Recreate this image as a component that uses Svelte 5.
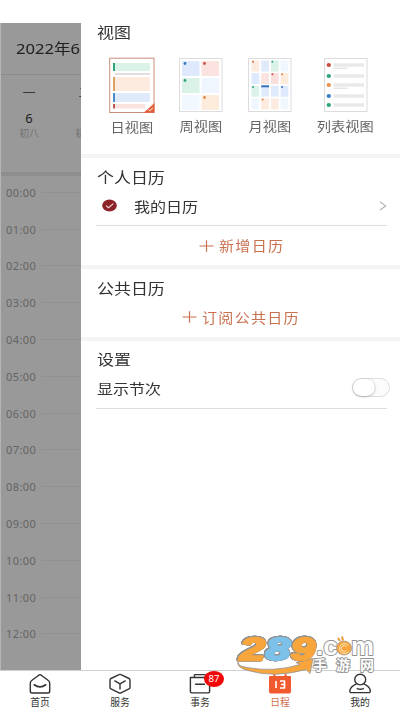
<script lang="ts">
  const hours = Array.from({ length: 13 }, (_, i) => `${String(i).padStart(2, '0')}:00`);

  const views = [
    { id: 'day', label: '日视图' },
    { id: 'week', label: '周视图' },
    { id: 'month', label: '月视图' },
    { id: 'list', label: '列表视图' }
  ];

  const tabs = [
    { id: 'home', label: '首页' },
    { id: 'service', label: '服务' },
    { id: 'affairs', label: '事务', badge: 87 },
    { id: 'schedule', label: '日程' },
    { id: 'mine', label: '我的' }
  ];

  const weekCells = [
    { fill: '#dfe9fd', dot: '#3d74c4' },
    { fill: '#fae3e0', dot: '#cc4b41' },
    { fill: '#daf2e8', dot: '#2fa678' },
    { fill: '#f0f6ff', dot: '' },
    { fill: '#f1f8ff', dot: '' },
    { fill: '#fdebdc', dot: '#e28a48' }
  ];

  const monthCells = [
    { fill: '#fdebdf', dot: '#d76c48' },
    { fill: '#dfeafb', dot: '' },
    { fill: '#daf2e8', dot: '#2fa678' },
    { fill: '#f0f7ff', dot: '' },
    { fill: '#dfe9fd', dot: '' },
    { fill: '#fae3e0', dot: '' },
    { fill: '#fadfdc', dot: '#cc4b41' },
    { fill: '#fdebdc', dot: '#e28a48' },
    { fill: '#daf2e8', dot: '#2fa678' },
    { fill: '#dfeafb', dot: '' },
    { fill: '#dfeafb', dot: '' },
    { fill: '#dfe9fd', dot: '#3d74c4' },
    { fill: '#f0f7ff', dot: '' },
    { fill: '#fdebdf', dot: '#e28a48' },
    { fill: '#fdebe2', dot: '' },
    { fill: '#f0f7ff', dot: '' }
  ];

  const listRows = [
    { y: 7, color: '#cc4b41', sub: true },
    { y: 18, color: '#2fa678', sub: false },
    { y: 27, color: '#e8914f', sub: true },
    { y: 38, color: '#3b7ec9', sub: false },
    { y: 47, color: '#2fa678', sub: false }
  ];

  let selected = $state('day');
  let activeTab = $state('schedule');
  let showSections = $state(false);
</script>

<div class="screen">
  <div class="main">
    <!-- Calendar behind the drawer -->
    <div class="calendar">
      <div class="month"><span class="wide">2022年6</span></div>
      <div class="week">
        <div class="day">
          <span class="weekday">一</span>
          <span class="date">6</span>
          <span class="lunar">初八</span>
        </div>
        <div class="day">
          <span class="weekday">二</span>
          <span class="date"></span>
          <span class="lunar">初九</span>
        </div>
      </div>
      <div class="hours">
        {#each hours as hour}
          <div class="hour"><span>{hour}</span><i></i></div>
        {/each}
      </div>
    </div>

    <div class="drawer">
      <section class="views-section">
        <h3><span class="wide">视图</span></h3>
        <div class="views">
          {#each views as view}
            <button class="view {view.id}-view" onclick={() => (selected = view.id)}>
              <svg width="46" height="57" viewBox="0 0 46 57">
                {#if view.id === 'day'}
                  <rect x=".7" y="1.2" width="44.3" height="54.3" fill="#fff" stroke="#c98d7c" />
                  <rect x="4" y="6" width="2" height="8" fill="#2fa678" />
                  <rect x="6" y="6" width="35" height="8" fill="#daf2e8" />
                  <rect x="6" y="16.5" width="35" height="1" fill="#c9bbbb" />
                  <rect x="4" y="20" width="2" height="14" fill="#dda15f" />
                  <rect x="6" y="20" width="35" height="14" fill="#fdebdf" />
                  <rect x="4" y="36" width="2" height="9" fill="#4a8cc9" />
                  <rect x="6" y="36" width="35" height="9" fill="#dfebfb" />
                  <rect x="4" y="47" width="2" height="4.5" fill="#bd5c4c" />
                  <rect x="6" y="47" width="30" height="4.5" fill="#fae3df" />
                {:else}
                  <rect x="1.5" y="1.5" width="42.5" height="53" fill="#fff" stroke="#dcdcdc" />
                {/if}

                {#if view.id === 'week'}
                  {#each weekCells as cell, i}
                    {@const x = 4 + (i % 2) * 19.5}
                    {@const y = 4 + Math.floor(i / 2) * 17}
                    <rect {x} {y} width="17.5" height="15" fill={cell.fill} />
                    {#if cell.dot}
                      <circle cx={x + 3} cy={y + 2.5} r="1.4" fill={cell.dot} />
                    {/if}
                  {/each}
                {:else if view.id === 'month'}
                  {#each monthCells as cell, i}
                    {@const x = 4.5 + (i % 4) * 9.7}
                    {@const y = 3.5 + Math.floor(i / 4) * 12.6}
                    <rect {x} {y} width="7.8" height="11" fill={cell.fill} />
                    {#if cell.dot}
                      <circle cx={x + 1.5} cy={y + 1.2} r="1" fill={cell.dot} />
                    {/if}
                  {/each}
                  <rect x="14.2" y="28.3" width="7.8" height="2" fill="#3474be" />
                {:else if view.id === 'list'}
                  {#each listRows as row}
                    <ellipse cx="5.8" cy={row.y + 1} rx="2.2" ry="1.9" fill={row.color} />
                    <rect x="10.5" y={row.y - 0.7} width="30.5" height="3.4" fill="#e9e9e9" />
                    {#if row.sub}
                      <rect x="10.5" y={row.y + 3.6} width="14" height="1.4" fill="#e4e4e4" />
                    {/if}
                  {/each}
                {/if}

                {#if view.id === selected}
                  <path d="M45.5 46v9.8H34.5z" fill="#e4603b" />
                  <path d="M39.3 52.5l1.6 1.3 2.9-3" fill="none" stroke="#fff" stroke-width=".9" />
                {/if}
              </svg>
              <span class="wide">{view.label}</span>
            </button>
          {/each}
        </div>
      </section>

      <section class="personal">
        <h3><span class="wide">个人日历</span></h3>
        <div class="item mine">
          <svg width="15" height="13" viewBox="0 0 15 13">
            <ellipse cx="7.5" cy="6.5" rx="7.3" ry="6.1" fill="#8c2227" />
            <path d="M4 6.6l2.5 2.1 4.8-4.1" fill="none" stroke="#f3dede" stroke-width="1.1" />
          </svg>
          <span class="wide name">我的日历</span>
          <svg class="arrow" width="8" height="10" viewBox="0 0 8 10">
            <path d="M1 .8l5.7 4.1L1 9" fill="none" stroke="#b0b0b0" stroke-width="1.1" />
          </svg>
        </div>
        <button class="add">
          <svg width="15" height="12" viewBox="0 0 15 12">
            <path d="M.5 6h14M7.5 .3v11.4" stroke="#c8714f" stroke-width="1.2" />
          </svg>
          <span class="wide">新增日历</span>
        </button>
      </section>

      <section class="public">
        <h3><span class="wide">公共日历</span></h3>
        <button class="add">
          <svg width="15" height="12" viewBox="0 0 15 12">
            <path d="M.5 6h14M7.5 .3v11.4" stroke="#c8714f" stroke-width="1.2" />
          </svg>
          <span class="wide">订阅公共日历</span>
        </button>
      </section>

      <section class="settings">
        <h3><span class="wide">设置</span></h3>
        <div class="item">
          <span class="wide">显示节次</span>
          <button
            class="switch"
            class:on={showSections}
            aria-label="显示节次"
            onclick={() => (showSections = !showSections)}
          ><i></i></button>
        </div>
      </section>
    </div>
  </div>

  <nav>
    {#each tabs as tab}
      <button class="tab" class:active={tab.id === activeTab} onclick={() => (activeTab = tab.id)}>
        <svg width="24" height="22" viewBox="0 0 24 22" fill="none" stroke="#333" stroke-width="1.4" stroke-linejoin="round" stroke-linecap="round">
          {#if tab.id === 'home'}
            <path d="M4 7.3L10.7 2.2q1.3-.9 2.6 0L20 7.3q1.7 1.2 1.7 2.7v8.2q0 1.8-1.8 1.8H4.1q-1.8 0-1.8-1.8V10q0-1.5 1.7-2.7z" />
            <path d="M6.3 11.8q5.7 4.2 11.4 0" stroke-width="1.7" />
          {:else if tab.id === 'service'}
            <path d="M12 1.4q.5 0 1 .3l8 3.8q1 .5 1 1.5v7.4q0 1-1 1.5l-8 3.9q-1 .5-2 0l-8-3.9q-1-.5-1-1.5V7q0-1 1-1.5l8-3.8q.5-.3 1-.3z" />
            <path d="M6.8 7.9l5.2 3 5.2-3M12 10.9v5.2" />
          {:else if tab.id === 'affairs'}
            <path d="M6.4 4.2V2.6q0-1 1-1h9.2q1 0 1 1v1.6M2.4 4.5h19.2v14q0 1.400-1.400 1.400H3.800q-1.400 0-1.400-1.400zM7.500 11.200h9" />
          {:else if tab.id === 'schedule'}
            <path d="M2 4h20v14.6q0 1-1 1H3q-1 0-1-1zM6.4 4V1.8M17.6 4V1.8" fill="#f1592e" stroke="#f1592e" stroke-width="2" />
            <path d="M8 8v7M12 8h4.5v7H12M13 11.5h3.5" stroke="#fff" stroke-width="1.6" stroke-linecap="butt" />
          {:else}
            <ellipse cx="12.2" cy="6.6" rx="5.5" ry="5.3" />
            <path d="M8.5 10.8q-5.8 2.5-6.6 6.5-.3 2.3 1.5 2.3h17.4q1.8 0 1.5-2.3-.8-4-6.5-6.5M9.3 15.6q3 1.4 6 0" />
          {/if}
        </svg>
        <span>{tab.label}</span>
        {#if tab.badge}
          <b>{tab.badge}</b>
        {/if}
      </button>
    {/each}
  </nav>

  <!-- Site watermark -->
  <svg class="watermark" width="142" height="42" viewBox="0 0 142 42">
    <path d="M3 25q-4 7 8 8.5 27 5 53-3l-4-2 17-4-3 15-4-4q-32 9-58 1Q-2 33 3 25z" fill="#f8a63c" stroke="#929292" stroke-width=".8" />
    <g class="digits" stroke-width="2.4">
      <text x="4" y="26" textLength="25" lengthAdjust="spacingAndGlyphs" fill="#f8a63c" stroke="#f8a63c">2</text>
      <text x="30" y="26" textLength="24" lengthAdjust="spacingAndGlyphs" fill="#7cc1ea" stroke="#7cc1ea">8</text>
      <text x="55" y="26" textLength="24" lengthAdjust="spacingAndGlyphs" fill="#f8a63c" stroke="#f8a63c">9</text>
    </g>
    <g fill="#fff" stroke="#929292" stroke-width="1.8">
      <text class="com" x="80" y="21" textLength="22" lengthAdjust="spacingAndGlyphs">.c</text>
      <text class="com" x="115" y="21" textLength="23" lengthAdjust="spacingAndGlyphs">m</text>
      <text class="cn" x="77" y="35.5">手</text>
      <text class="cn" x="100" y="35.5">游</text>
      <text class="cn" x="124" y="35.5">网</text>
    </g>
    <ellipse cx="108" cy="14" rx="7.5" ry="7" fill="#f8a63c" stroke="#929292" stroke-width=".7" />
    <path d="M104 7l-2-3M107 6.5l-1-4" stroke="#e5983d" stroke-width="2" />
    <path d="M112.500 17.500a5 5 0 1 1 0-6M110.500 16.500a3 3 0 1 1 0-4" fill="none" stroke="#fff0d8" stroke-width=".8" />
  </svg>
</div>

<style>
  :global(body) {
    background: #fff;
  }

  .screen {
    position: relative;
    width: 400px;
    height: 711px;
    overflow: hidden;
    box-sizing: border-box;
    padding-top: 23px;
    display: flex;
    flex-direction: column;
    font-family: 'Noto Sans', 'Noto Sans CJK SC', sans-serif;
    color: #333;
  }

  .main {
    display: flex;
    height: 647px;
    overflow: hidden;
  }

  button {
    border: 0;
    padding: 0;
    background: none;
    font-family: inherit;
    color: inherit;
  }

  svg {
    display: block;
    flex-shrink: 0;
  }

  .wide {
    display: inline-block;
    white-space: nowrap;
    transform: scaleX(1.13);
    transform-origin: left center;
  }

  /* Calendar */
  .calendar {
    width: 81px;
    box-sizing: border-box;
    flex-shrink: 0;
    overflow: hidden;
    background: #999;
    border-left: 1px solid #b5b5b5;
  }

  .month {
    height: 51px;
    line-height: 51px;
    padding-left: 15px;
    border-bottom: 1px solid #8a8a8a;
    font-size: 14.7px;
    color: #202020;
    white-space: nowrap;
  }

  .week {
    display: flex;
    height: 97px;
    border-bottom: 4px solid #8e8e8e;
  }

  .day {
    display: flex;
    flex-direction: column;
    align-items: center;
    flex: 0 0 56px;
    padding-top: 9px;
  }

  .weekday {
    height: 25px;
    line-height: 16px;
    font-size: 13px;
    color: #383838;
  }

  .date {
    height: 18px;
    line-height: 18px;
    font-size: 13px;
    color: #202020;
  }

  .lunar {
    line-height: 14px;
    font-size: 9.8px;
    color: #727272;
  }

  .hour {
    display: flex;
    align-items: center;
    gap: 5px;
    height: 36.8px;
    padding-left: 5px;
    font-size: 11px;
    color: #646464;
  }

  .hour span {
    width: 30px;
    letter-spacing: 0.4px;
  }

  .hour i {
    flex: 1;
    height: 1px;
    background: #919191;
  }

  .hours {
    margin-top: -2px;
  }

  /* Drawer */
  .drawer {
    flex: 1;
    background: #fff;
  }

  section {
    box-sizing: border-box;
    padding: 0 13px 0 15px;
    border-bottom: 4px solid #f4f4f4;
  }

  h3 {
    margin: 0;
    padding-left: 1px;
    height: 20px;
    line-height: 20px;
    font-size: 15px;
    font-weight: 400;
  }

  .views-section {
    height: 135px;
  }

  .views-section h3 {
    line-height: 18px;
  }

  .views {
    display: flex;
    align-items: flex-start;
    margin-left: -2px;
    padding-top: 14px;
  }

  .view {
    display: flex;
    flex-direction: column;
    align-items: center;
    width: 68px;
    font-size: 12.6px;
    color: #666;
  }

  .view .wide {
    transform-origin: center;
    height: 20px;
    line-height: 20px;
    margin-top: 3px;
  }

  .day-view {
    width: 75px;
  }

  .view.day-view .wide {
    margin-top: 4px;
  }

  .week-view {
    width: 64px;
  }

  .month-view {
    width: 73px;
  }

  .list-view {
    width: 79px;
  }

  .personal {
    height: 111px;
    padding-top: 9px;
  }

  .item {
    display: flex;
    align-items: center;
    box-sizing: border-box;
    height: 39px;
    border-bottom: 1px solid #dedede;
    font-size: 14.2px;
  }

  .mine {
    padding: 0 0 1px 6px;
  }

  .name {
    margin-left: 17px;
  }

  .arrow {
    margin-left: auto;
    margin-right: 0;
  }

  .add {
    display: flex;
    align-items: center;
    gap: 5px;
    height: 39px;
    font-size: 13.3px;
    letter-spacing: 1.15px;
    color: #c8714f;
  }

  .personal .add {
    margin-left: 103px;
  }

  .public {
    height: 72px;
    padding-top: 9px;
  }

  .public .add {
    height: 38px;
    margin-left: 86px;
  }

  .settings {
    padding-top: 8px;
    border-bottom: 0;
  }

  .settings .item {
    height: 40px;
    padding: 0 0 2px 1px;
  }

  .switch {
    display: flex;
    box-sizing: border-box;
    width: 38px;
    height: 19px;
    margin-left: auto;
    margin-right: -3px;
    border: 1px solid #dedede;
    border-radius: 10px;
    background: #fcfcfc;
  }

  .switch i {
    width: 22px;
    height: 17px;
    border-radius: 10px;
    background: #fff;
    box-shadow: 0 0.5px 2px #999;
  }

  .switch.on {
    justify-content: flex-end;
    background: #e4603b;
  }

  /* Tab bar */
  nav {
    display: flex;
    height: 41px;
    box-sizing: border-box;
    border-top: 1px solid #cfcfcf;
    background: #fff;
  }

  .tab {
    position: relative;
    display: flex;
    flex-direction: column;
    align-items: center;
    width: 80px;
    padding-top: 2px;
    font-size: 9.8px;
  }

  .tab span {
    line-height: 15px;
  }

  .tab.active {
    color: #d0714f;
  }

  .tab b {
    position: absolute;
    left: 44px;
    top: 0;
    width: 20px;
    height: 16px;
    border-radius: 50%;
    background: #f00808;
    color: #fff;
    font-size: 9.5px;
    font-weight: 400;
    line-height: 16px;
  }

  .watermark {
    position: absolute;
    left: 236px;
    top: 634px;
    pointer-events: none;
  }

  .watermark text {
    paint-order: stroke;
    stroke-linejoin: round;
    font-family: 'Liberation Sans', 'Noto Sans CJK SC', sans-serif;
    font-weight: 700;
  }

  .digits {
    filter: drop-shadow(0.5px 0 0 #929292) drop-shadow(-0.5px 0 0 #929292)
      drop-shadow(0 0.5px 0 #929292) drop-shadow(0 -0.5px 0 #929292);
  }

  .digits text {
    font-size: 31px;
    font-style: italic;
  }

  .watermark .com {
    font-size: 25px;
  }

  .watermark .cn {
    font-size: 14px;
  }
</style>
